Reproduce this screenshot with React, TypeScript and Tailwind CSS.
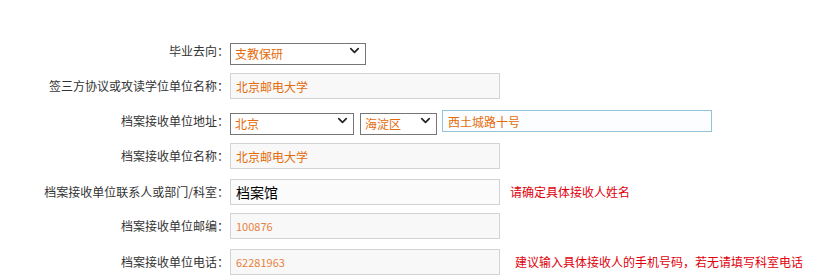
import { ChevronDown } from "lucide-react";
import type { ReactNode } from "react";

const font = { fontFamily: '"SimSun", "Noto Sans CJK SC", sans-serif' };

function Row({ label, children, className = "" }: { label: string; children: ReactNode; className?: string }) {
  return (
    <div className={`flex items-center ${className}`}>
      <label className="w-[224px] shrink-0 text-right text-[12px] text-[#333]">
        {label}
        <span className="inline-block w-[7px] overflow-visible whitespace-nowrap text-left">：</span>
      </label>
      <div className="ml-[6px] flex items-center">{children}</div>
    </div>
  );
}

function Select({ value, width }: { value: string; width: string }) {
  return (
    <div className={`relative h-[22px] ${width}`}>
      <select
        defaultValue={value}
        className="h-full w-full appearance-none border border-[#767676] bg-white pl-[4px] text-[12px] text-[#e46c0a] outline-none"
      >
        <option>{value}</option>
      </select>
      <ChevronDown
        size={15}
        strokeWidth={2.6}
        className="pointer-events-none absolute right-[4px] top-[3px] text-[#222]"
      />
    </div>
  );
}

function TextBox({ value, className = "" }: { value: string; className?: string }) {
  return (
    <input
      readOnly
      value={value}
      className={`h-[26px] w-[270px] border border-[#d3d3d3] bg-[#f8f8f8] pl-[5px] outline-none ${className}`}
    />
  );
}

export default function App() {
  return (
    <div className="h-[280px] w-[840px] bg-white pt-[40px]" style={font}>
      <Row label="毕业去向">
        <Select value="支教保研" width="w-[136px]" />
      </Row>

      <Row label="签三方协议或攻读学位单位名称" className="mt-[11px]">
        <TextBox value="北京邮电大学" className="text-[12px] text-[#e46c0a]" />
      </Row>

      <Row label="档案接收单位地址" className="mt-[11px]">
        <Select value="北京" width="w-[124px]" />
        <div className="ml-[6px]">
          <Select value="海淀区" width="w-[77px]" />
        </div>
        <input
          readOnly
          value="西土城路十号"
          className="ml-[5px] h-[22px] w-[270px] border border-[#93c3d9] bg-[#fcfdfe] pl-[5px] text-[12px] text-[#e46c0a] outline-none"
        />
      </Row>

      <Row label="档案接收单位名称" className="mt-[11px]">
        <TextBox value="北京邮电大学" className="text-[12px] text-[#e46c0a]" />
      </Row>

      <Row label="档案接收单位联系人或部门/科室" className="mt-[10px]">
        <TextBox value="档案馆" className="bg-[#fbfbfb] text-[14px] text-black" />
        <span className="ml-[10px] text-[12px] text-[#e0000b]">请确定具体接收人姓名</span>
      </Row>

      <Row label="档案接收单位邮编" className="mt-[8px]">
        <TextBox value="100876" className="text-[11px] text-[#e9813e]" />
      </Row>

      <Row label="档案接收单位电话" className="mt-[10px]">
        <TextBox value="62281963" className="text-[11px] text-[#e9813e]" />
        <span className="ml-[15px] text-[12px] text-[#e0000b]">
          建议输入具体接收人的手机号码，若无请填写科室电话
        </span>
      </Row>
    </div>
  );
}
